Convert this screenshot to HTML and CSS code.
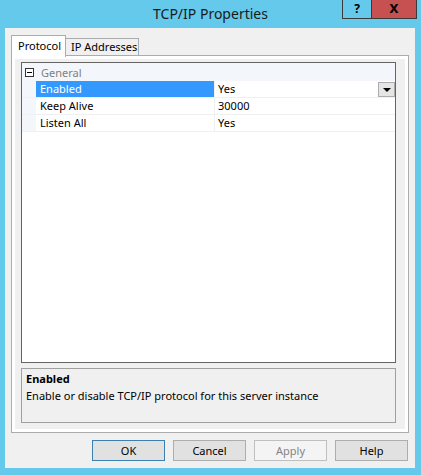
FILE: index.html
```html
<!DOCTYPE html>
<html lang="en">
<head>
    <meta charset="UTF-8">
    <title>TCP/IP Properties</title>
    <link rel="stylesheet" href="styles.css">
</head>
<body>

    <!-- Title bar -->
    <div class="titlebar">
        <span></span>
        <div class="title">TCP/IP Properties</div>
        <div class="caption-buttons">
            <span class="cap help">?</span>
            <span class="cap close">X</span>
        </div>
    </div>

    <!-- Dialog client area -->
    <div class="client">
        <div class="tabs">
            <div class="tab active">Protocol</div>
            <div class="tab">IP Addresses</div>
        </div>

        <div class="panel">
            <div class="page">
                <div class="grid">
                    <div class="category"><span class="toggle"></span>General</div>
                    <div class="prop selected">
                        <span class="margin"></span>
                        <span class="name">Enabled</span>
                        <span class="value">Yes<span class="drop"></span></span>
                    </div>
                    <div class="prop">
                        <span class="margin"></span>
                        <span class="name">Keep Alive</span>
                        <span class="value">30000</span>
                    </div>
                    <div class="prop">
                        <span class="margin"></span>
                        <span class="name">Listen All</span>
                        <span class="value">Yes</span>
                    </div>
                </div>

                <div class="desc">
                    <div class="desc-title">Enabled</div>
                    <div class="desc-text">Enable or disable TCP/IP protocol for this server instance</div>
                </div>
            </div>
        </div>

        <div class="buttons">
            <button class="btn default">OK</button>
            <button class="btn">Cancel</button>
            <button class="btn" disabled>Apply</button>
            <button class="btn">Help</button>
        </div>
    </div>

</body>
</html>
```

FILE: styles.css
```css
/* General */
body {
    margin: 0;
    background: #64c9ea;
    font-family: 'Noto Sans', sans-serif;
    font-size: 11px;
    color: #000;
    height: 475px;
    overflow: hidden;
}

/* Title bar */
.titlebar {
    display: grid;
    grid-template-columns: 1fr auto 1fr;
    height: 28px;
}

.title {
    font-size: 14px;
    line-height: 27px;
    color: #1a1a1a;
}

.caption-buttons {
    justify-self: end;
    align-self: start;
    display: flex;
    margin-right: 4px;
    border: 1px solid #3a3a3a;
    border-top: none;
}

.cap {
    height: 18px;
    line-height: 18px;
    text-align: center;
    font-weight: bold;
    font-size: 12px;
}

.cap.help {
    width: 28px;
    border-right: 1px solid #3a3a3a;
}

.cap.close {
    width: 44px;
    background: #c75050;
    font-family: 'DejaVu Sans', sans-serif;
}

/* Client area */
.client {
    margin: 0 6px 0 5px;
    height: 440px;
    box-sizing: border-box;
    background: #f0f0f0;
    padding: 7px 6px 0 6px;
}

/* Tabs */
.tabs {
    display: flex;
    align-items: flex-end;
    height: 20px;
}

.tab {
    box-sizing: border-box;
    border: 1px solid #acacac;
    border-bottom: none;
    line-height: 15px;
}

.tab.active {
    position: relative;
    z-index: 1;
    width: 55px;
    height: 22px;
    margin-bottom: -2px;
    background: #fff;
    padding: 2px 0 0 6px;
}

.tab:not(.active) {
    width: 74px;
    height: 17px;
    margin-left: -1px;
    padding: 0 0 0 5px;
}

/* Tab panel */
.panel {
    border: 1px solid #acacac;
    background: #fff;
    padding: 3px;
    height: 378px;
    box-sizing: border-box;
}

.page {
    background: #f0f0f0;
    height: 100%;
    box-sizing: border-box;
    padding: 3px 9px 5px 6px;
    display: flex;
    flex-direction: column;
}

/* Property grid */
.grid {
    height: 301px;
    box-sizing: border-box;
    border: 1px solid #646464;
    background: #fff;
}

.category {
    display: flex;
    align-items: center;
    height: 18px;
    background: #f3f6fb;
    color: #808080;
}

.toggle {
    position: relative;
    width: 7px;
    height: 7px;
    margin: 0 7px 0 3px;
    border: 1px solid #333;
    background: #fff;
}

.toggle::after {
    content: "";
    position: absolute;
    left: 1px;
    top: 3px;
    width: 5px;
    height: 1px;
    background: #000;
}

.prop {
    display: flex;
    height: 16px;
    line-height: 16px;
    border-bottom: 1px solid #f0f0f0;
}

.prop .margin {
    width: 14px;
    background: #f3f6fb;
}

.prop .name {
    width: 174px;
    padding-left: 4px;
    border-right: 1px solid #f0f0f0;
}

.prop.selected .name {
    background: #3399ff;
    color: #fff;
}

.prop .value {
    flex: 1;
    display: flex;
    padding-left: 3px;
}

.drop {
    position: relative;
    margin: 1px 0 0 auto;
    width: 15px;
    height: 13px;
    border: 1px solid #acacac;
    background: #e5e5e5;
}

.drop::after {
    content: "";
    position: absolute;
    left: 4px;
    top: 5px;
    border-left: 4px solid transparent;
    border-right: 4px solid transparent;
    border-top: 4px solid #000;
}

/* Description box */
.desc {
    margin-top: 5px;
    height: 55px;
    box-sizing: border-box;
    border: 1px solid #a0a0a0;
    padding: 1px 4px;
    line-height: 17px;
}

.desc-title {
    font-weight: bold;
}

/* Dialog buttons */
.buttons {
    display: flex;
    justify-content: flex-end;
    gap: 8px;
    margin: 7px 1px 0 0;
}

.btn {
    width: 73px;
    height: 21px;
    padding: 0;
    font-family: 'Noto Sans', sans-serif;
    font-size: 11px;
    color: #000;
    background: #e1e1e1;
    border: 1px solid #adadad;
}

.btn.default {
    border-color: #3c7fb1;
}

.btn:disabled {
    background: #f4f4f4;
    border-color: #bfbfbf;
    color: #838383;
}
```
